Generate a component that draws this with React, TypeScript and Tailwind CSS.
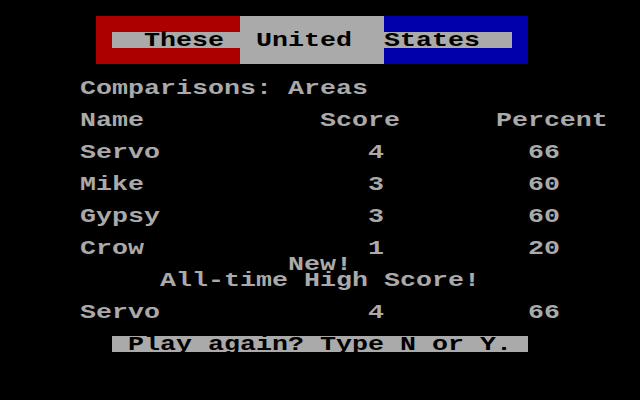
import React from "react"

// 40 x 25 text screen, each cell 16x16
const pad = (parts: [number, string][]) => {
  let s = ""
  for (const [col, text] of parts) {
    while (s.length < col) s += " "
    s += text
  }
  return s
}

function Txt({ children }: { children: React.ReactNode }) {
  return <span className="inline-block origin-bottom scale-y-[0.78] -translate-y-[1.5px]">{children}</span>
}

function Line({ text = "" }: { text?: string }) {
  return (
    <div className="h-4 text-[#aaaaaa]">
      <Txt>{text}</Txt>
    </div>
  )
}

const scores = [
  { name: "Servo", score: 4, pct: 66 },
  { name: "Mike", score: 3, pct: 60 },
  { name: "Gypsy", score: 3, pct: 60 },
  { name: "Crow", score: 1, pct: 20 },
]

export default function App() {
  return (
    <div className="w-[640px] h-[400px] overflow-hidden bg-black font-['Liberation_Mono',monospace] font-bold text-[26.667px] leading-4 whitespace-pre">
      <Line />
      {/* banner */}
      <div className="flex h-4 ml-[96px]">
        <div className="w-[144px] bg-[#aa0000]" />
        <div className="w-[144px] bg-[#aaaaaa]" />
        <div className="w-[144px] bg-[#0000aa]" />
      </div>
      <div className="flex h-4 ml-[96px]">
        <div className="w-4 bg-[#aa0000]" />
        <div className="w-[400px] bg-[#aaaaaa] text-black">
          <Txt>{"  These  United  States  "}</Txt>
        </div>
        <div className="w-4 bg-[#0000aa]" />
      </div>
      <div className="flex h-4 ml-[96px]">
        <div className="w-[144px] bg-[#aa0000]" />
        <div className="w-[144px] bg-[#aaaaaa]" />
        <div className="w-[144px] bg-[#0000aa]" />
      </div>
      <Line />
      <Line text={pad([[5, "Comparisons: Areas"]])} />
      <Line />
      <Line text={pad([[5, "Name"], [20, "Score"], [31, "Percent"]])} />
      {scores.map((s) => (
        <React.Fragment key={s.name}>
          <Line />
          <Line text={pad([[5, s.name], [23, String(s.score)], [33, String(s.pct)]])} />
        </React.Fragment>
      ))}
      <Line text={pad([[18, "New!"]])} />
      <Line text={pad([[10, "All-time High Score!"]])} />
      <Line />
      <Line text={pad([[5, "Servo"], [23, "4"], [33, "66"]])} />
      <Line />
      <div className="h-4 ml-[112px] w-[416px] bg-[#aaaaaa] text-black">
        <Txt>{" Play again? Type N or Y. "}</Txt>
      </div>
    </div>
  )
}
